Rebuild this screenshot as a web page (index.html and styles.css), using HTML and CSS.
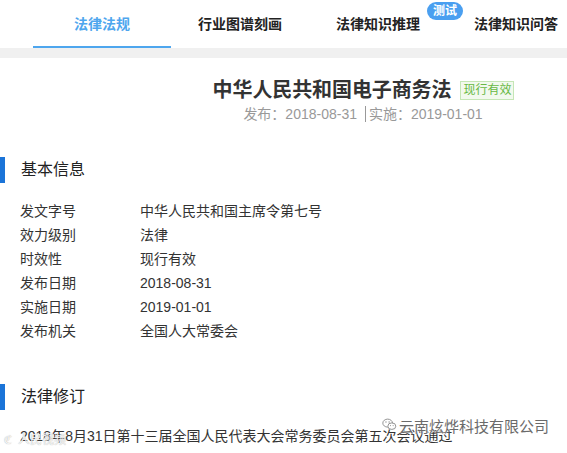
FILE: index.html
```html
<!DOCTYPE html>
<html lang="zh-CN">
<head>
<meta charset="utf-8">
<title>中华人民共和国电子商务法</title>
<link rel="stylesheet" href="styles.css">
</head>
<body>
<div class="page">
  <nav class="tabs">
    <div class="tab active">法律法规</div>
    <div class="tab">行业图谱刻画</div>
    <div class="tab">法律知识推理<span class="beta">测试</span></div>
    <div class="tab">法律知识问答</div>
  </nav>
  <div class="band"></div>
  <div class="head">
    <div class="title-line">
      <h1 class="title">中华人民共和国电子商务法</h1>
      <span class="status">现行有效</span>
    </div>
    <div class="dates">发布：2018-08-31<span class="sep"></span>实施：2019-01-01</div>
  </div>
  <h2 class="section">基本信息</h2>
  <div class="info">
    <div class="row"><span class="label">发文字号</span><span class="value">中华人民共和国主席令第七号</span></div>
    <div class="row"><span class="label">效力级别</span><span class="value">法律</span></div>
    <div class="row"><span class="label">时效性</span><span class="value">现行有效</span></div>
    <div class="row"><span class="label">发布日期</span><span class="value">2018-08-31</span></div>
    <div class="row"><span class="label">实施日期</span><span class="value">2019-01-01</span></div>
    <div class="row"><span class="label">发布机关</span><span class="value">全国人大常委会</span></div>
  </div>
  <h2 class="section second">法律修订</h2>
  <p class="revision">2018年8月31日第十三届全国人民代表大会常务委员会第五次会议通过</p>
  <div class="wm-right">
    <svg class="wx" viewBox="0 0 16 14" width="15" height="13" aria-hidden="true">
      <ellipse cx="6" cy="5.5" rx="5.2" ry="4.3" fill="#fff" stroke="#8a8a8a" stroke-width="1"/>
      <ellipse cx="10.5" cy="8.8" rx="4.3" ry="3.5" fill="#fff" stroke="#8a8a8a" stroke-width="1"/>
      <circle cx="4.2" cy="4.3" r="0.7" fill="#8a8a8a"/>
      <circle cx="7.6" cy="4.3" r="0.7" fill="#8a8a8a"/>
      <circle cx="9.1" cy="8.2" r="0.55" fill="#8a8a8a"/>
      <circle cx="11.9" cy="8.2" r="0.55" fill="#8a8a8a"/>
    </svg>
    <span>云南炫烨科技有限公司</span>
  </div>
  <div class="wm-left"><span class="wm-logo">ℭ</span>人民视频</div>
</div>
</body>
</html>
```

FILE: styles.css
```css
html, body {
  margin: 0;
  padding: 0;
  background: #fff;
}
body {
  font-family: "Liberation Sans", "Noto Sans CJK SC", sans-serif;
  color: #333;
  overflow: hidden;
  width: 567px;
  height: 453px;
}
.page {
  position: relative;
  width: 567px;
  height: 453px;
  overflow: hidden;
}
.tabs {
  display: flex;
  height: 48px;
  padding-left: 33px;
  box-sizing: border-box;
  width: 760px;
}
.tab {
  position: relative;
  flex: 0 0 138px;
  box-sizing: border-box;
  height: 48px;
  padding-top: 13px;
  line-height: 22px;
  font-size: 14px;
  font-weight: 700;
  text-align: center;
  color: #222;
  border-bottom: 2px solid transparent;
}
.tab.active {
  color: #4ea6ee;
  border-bottom-color: #4ea6ee;
}
.beta {
  position: absolute;
  left: 118px;
  top: 2px;
  width: 36px;
  height: 18px;
  line-height: 18px;
  border-radius: 9px;
  background: #4a9ff0;
  color: #fff;
  font-size: 12px;
  font-weight: 700;
  text-align: center;
}
.band {
  height: 10px;
  background: #f0f0f0;
}
.head {
  width: 726px;
  margin-top: 18px;
  text-align: center;
}
.title-line {
  display: flex;
  justify-content: center;
  align-items: center;
  height: 28px;
  gap: 9px;
  padding-left: 1px;
}
.title {
  margin: 0;
  font-size: 20px;
  font-weight: 700;
  line-height: 28px;
  color: #333;
  letter-spacing: -0.1px;
}
.status {
  font-size: 12px;
  line-height: 15px;
  padding: 1px 2px;
  color: #67b844;
  background: #f2f9ee;
  border: 1px solid #c5e6b5;
}
.dates {
  font-size: 14px;
  line-height: 20px;
  color: #999;
}
.sep {
  display: inline-block;
  width: 1px;
  height: 16px;
  background: #999;
  vertical-align: -3px;
  margin: 0 3px 0 8px;
}
.section {
  margin: 33px 0 0;
  height: 26px;
  line-height: 26px;
  border-left: 5px solid #1b74d8;
  padding-left: 16px;
  font-size: 16px;
  font-weight: 400;
  color: #222;
}
.section.second {
  margin-top: 41px;
}
.info {
  margin-top: 16px;
  padding-left: 20px;
}
.row {
  display: flex;
  height: 24px;
  line-height: 24px;
  font-size: 14px;
  color: #333;
}
.label {
  width: 120px;
}
.revision {
  margin: 14px 0 0;
  padding-left: 20px;
  font-size: 14px;
  line-height: 24px;
  color: #333;
  white-space: nowrap;
}
.wm-right {
  position: absolute;
  left: 382px;
  top: 416px;
  display: flex;
  align-items: center;
  gap: 2px;
  font-size: 15px;
  line-height: 22px;
  color: #6a6a6a;
  text-shadow: 0 0 2px #fff, 0 0 1px #fff;
}
.wx {
  margin-top: -6px;
}
.wm-left {
  position: absolute;
  left: 4px;
  top: 431px;
  font-size: 12px;
  line-height: 18px;
  color: rgba(255, 255, 255, 0.9);
  text-shadow: 0 0 1px #999;
}
.wm-logo {
  margin-right: 6px;
}
```
